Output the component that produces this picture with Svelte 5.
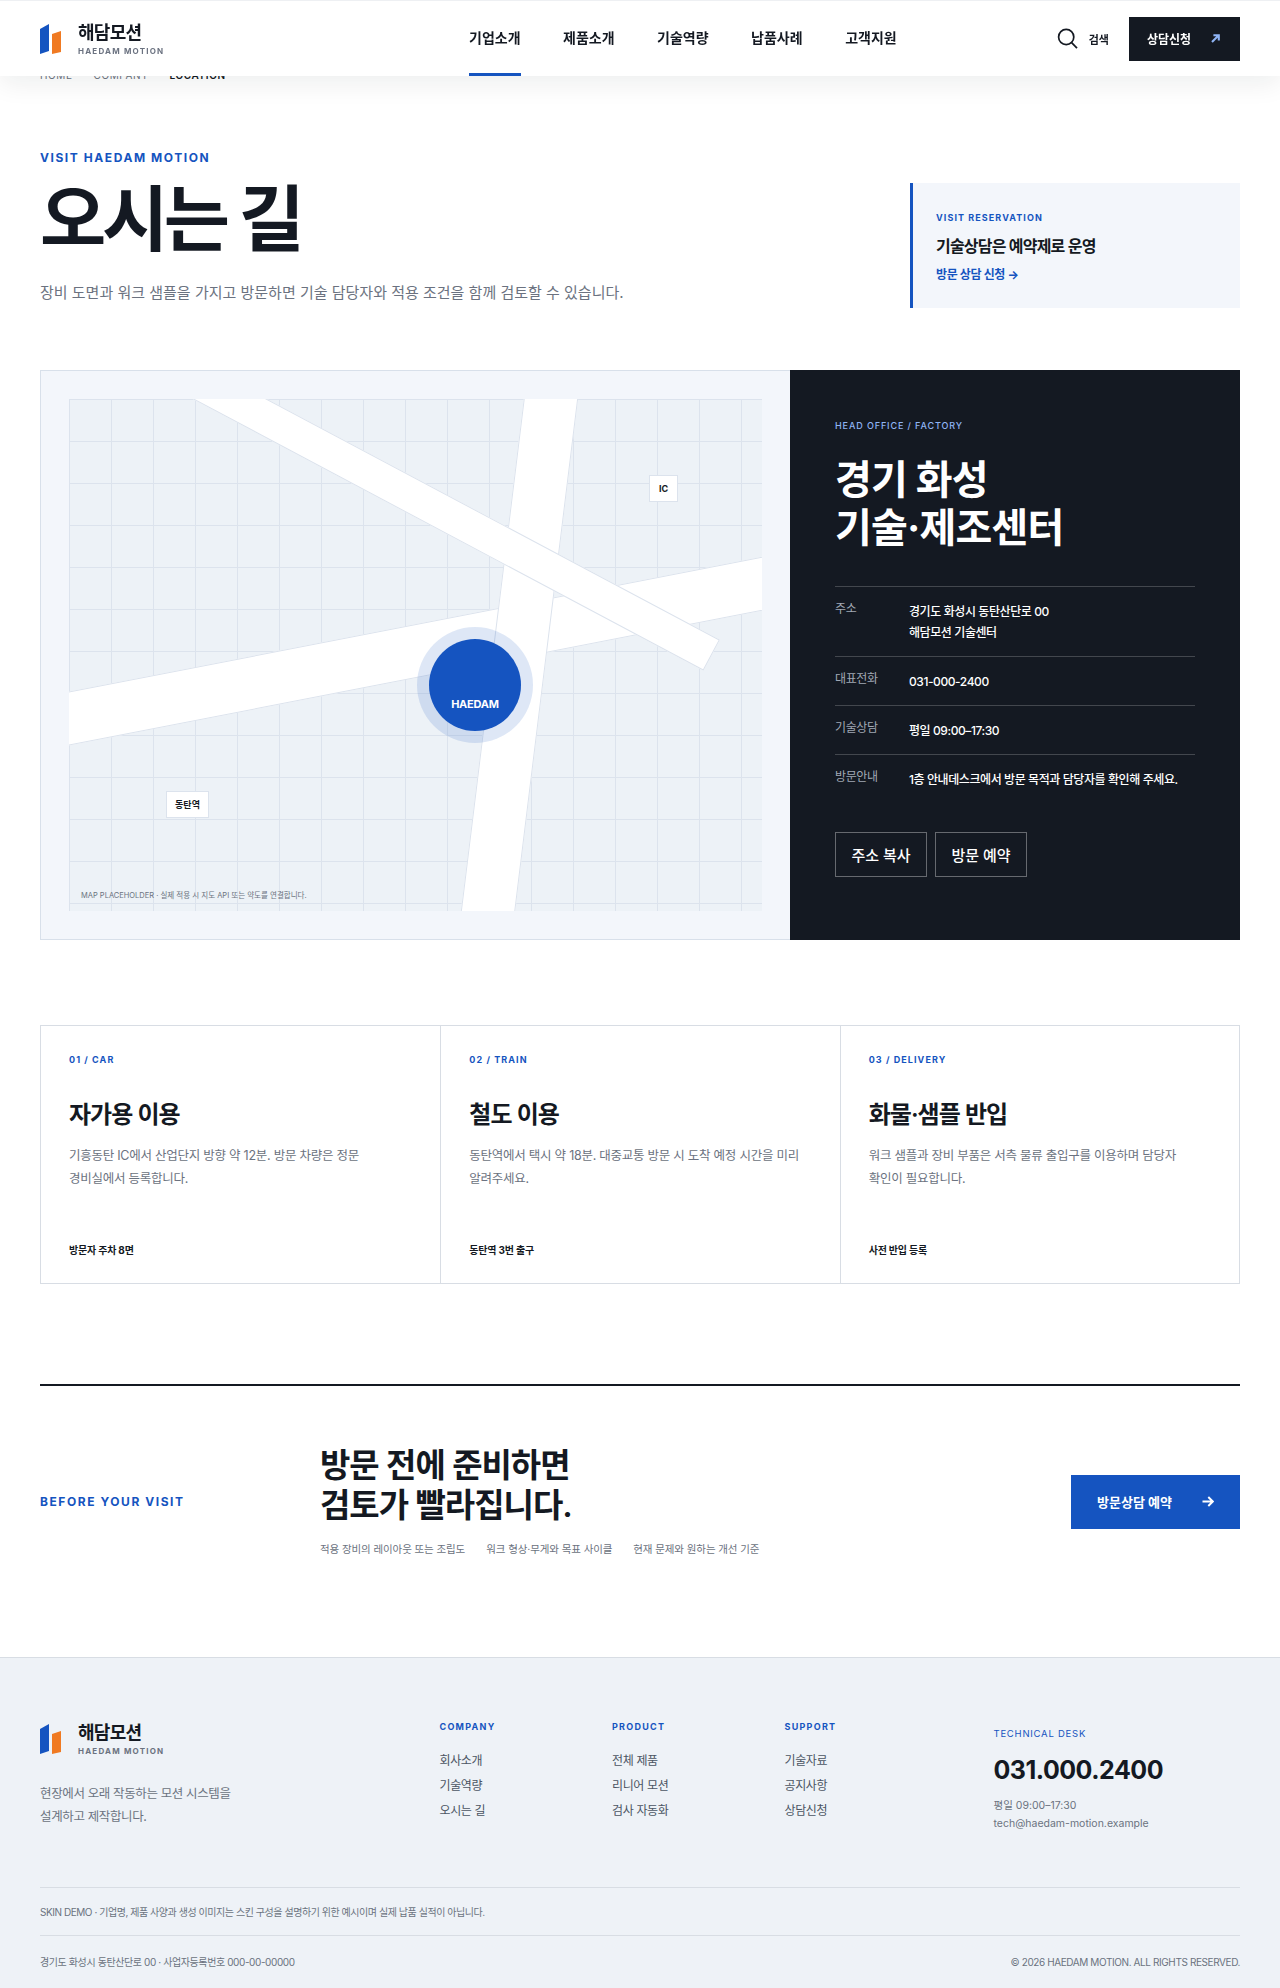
<script>
  const nav = ['기업소개', '제품소개', '기술역량', '납품사례', '고객지원'];

  const info = [
    { label: '주소', lines: ['경기도 화성시 동탄산단로 00', '해담모션 기술센터'] },
    { label: '대표전화', lines: ['031-000-2400'] },
    { label: '기술상담', lines: ['평일 09:00–17:30'] },
    { label: '방문안내', lines: ['1층 안내데스크에서 방문 목적과 담당자를 확인해 주세요.'] }
  ];

  const routes = [
    {
      tag: '01 / CAR',
      title: '자가용 이용',
      desc: '기흥동탄 IC에서 산업단지 방향 약 12분. 방문 차량은 정문 경비실에서 등록합니다.',
      foot: '방문자 주차 8면'
    },
    {
      tag: '02 / TRAIN',
      title: '철도 이용',
      desc: '동탄역에서 택시 약 18분. 대중교통 방문 시 도착 예정 시간을 미리 알려주세요.',
      foot: '동탄역 3번 출구'
    },
    {
      tag: '03 / DELIVERY',
      title: '화물·샘플 반입',
      desc: '워크 샘플과 장비 부품은 서측 물류 출입구를 이용하며 담당자 확인이 필요합니다.',
      foot: '사전 반입 등록'
    }
  ];

  const checklist = ['적용 장비의 레이아웃 또는 조립도', '워크 형상·무게와 목표 사이클', '현재 문제와 원하는 개선 기준'];

  const footerCols = [
    { title: 'COMPANY', links: ['회사소개', '기술역량', '오시는 길'] },
    { title: 'PRODUCT', links: ['전체 제품', '리니어 모션', '검사 자동화'] },
    { title: 'SUPPORT', links: ['기술자료', '공지사항', '상담신청'] }
  ];
</script>

{#snippet logo()}
  <div class="logo">
    <svg class="logo-mark" width="21" height="30" viewBox="0 0 21 30" aria-hidden="true">
      <polygon points="0,5 9,0 9,27 0,30" fill="#1554c0" />
      <polygon points="12,10 21,7 21,28 12,30" fill="#f07a22" />
    </svg>
    <div class="logo-text">
      <strong>해담모션</strong>
      <span>HAEDAM MOTION</span>
    </div>
  </div>
{/snippet}

<header class="header">
  {@render logo()}
  <nav class="nav">
    {#each nav as item, i}
      <a href="#top" class:active={i === 0}>{item}</a>
    {/each}
  </nav>
  <div class="header-actions">
    <button class="search" type="button">
      <svg width="21" height="21" viewBox="0 0 21 21" fill="none" stroke="#141922" stroke-width="1.7" aria-hidden="true">
        <circle cx="9.2" cy="9" r="7.6" />
        <path d="M14.6 14.6 L20 20.2" />
      </svg>
      <span>검색</span>
    </button>
    <a class="header-cta" href="#top">
      <span>상담신청</span>
      <svg width="9" height="9" viewBox="0 0 9 9" fill="none" stroke="#8fb4f5" stroke-width="2.1" aria-hidden="true">
        <path d="M1 8 L7.2 1.8 M2.4 1.2 H7.8 V6.6" />
      </svg>
    </a>
  </div>
</header>

<main class="page">
  <div class="crumbs">
    <span>HOME</span>
    <span>COMPANY</span>
    <span class="current">LOCATION</span>
  </div>

  <section class="hero">
    <div class="hero-copy">
      <p class="eyebrow">VISIT HAEDAM MOTION</p>
      <h1>오시는 길</h1>
      <p class="hero-sub">장비 도면과 워크 샘플을 가지고 방문하면 기술 담당자와 적용 조건을 함께 검토할 수 있습니다.</p>
    </div>
    <aside class="reserve">
      <p class="reserve-tag">VISIT RESERVATION</p>
      <p class="reserve-title">기술상담은 예약제로 운영</p>
      <a href="#top">방문 상담 신청 →</a>
    </aside>
  </section>

  <section class="location">
    <div class="map-wrap">
      <div class="map">
        <div class="road road-a"></div>
        <div class="road road-b"></div>
        <div class="road road-c"></div>
        <div class="pin">HAEDAM</div>
        <div class="tag tag-ic">IC</div>
        <div class="tag tag-station">동탄역</div>
        <p class="map-note">MAP PLACEHOLDER · 실제 적용 시 지도 API 또는 약도를 연결합니다.</p>
      </div>
    </div>
    <div class="office">
      <p class="office-tag">HEAD OFFICE / FACTORY</p>
      <h2>경기 화성<br />기술·제조센터</h2>
      <dl class="info">
        {#each info as row}
          <div class="info-row">
            <dt>{row.label}</dt>
            <dd>
              {#each row.lines as line}
                <span>{line}</span>
              {/each}
            </dd>
          </div>
        {/each}
      </dl>
      <div class="office-actions">
        <button type="button">주소 복사</button>
        <button type="button">방문 예약</button>
      </div>
    </div>
  </section>

  <section class="routes">
    {#each routes as route}
      <article class="route">
        <p class="route-tag">{route.tag}</p>
        <h3>{route.title}</h3>
        <p class="route-desc">{route.desc}</p>
        <p class="route-foot">{route.foot}</p>
      </article>
    {/each}
  </section>

  <section class="prepare">
    <p class="prepare-tag">BEFORE YOUR VISIT</p>
    <div class="prepare-body">
      <h2>방문 전에 준비하면<br />검토가 빨라집니다.</h2>
      <ul>
        {#each checklist as item}
          <li>{item}</li>
        {/each}
      </ul>
    </div>
    <a class="prepare-cta" href="#top">
      <span>방문상담 예약</span>
      <svg width="12" height="11" viewBox="0 0 12 11" fill="none" stroke="#fff" stroke-width="1.9" aria-hidden="true">
        <path d="M0.5 5.5 H10.5 M6.3 1 L10.8 5.5 L6.3 10" />
      </svg>
    </a>
  </section>
</main>

<footer class="footer">
  <div class="footer-top">
    <div class="footer-brand">
      {@render logo()}
      <p>현장에서 오래 작동하는 모션 시스템을<br />설계하고 제작합니다.</p>
    </div>
    {#each footerCols as col}
      <div class="footer-col">
        <h4>{col.title}</h4>
        {#each col.links as link}
          <a href="#top">{link}</a>
        {/each}
      </div>
    {/each}
    <div class="footer-desk">
      <p class="desk-tag">TECHNICAL DESK</p>
      <p class="desk-phone">031.000.2400</p>
      <p class="desk-info">평일 09:00–17:30<br />tech@haedam-motion.example</p>
    </div>
  </div>
  <p class="footer-note">SKIN DEMO · 기업명, 제품 사양과 생성 이미지는 스킨 구성을 설명하기 위한 예시이며 실제 납품 실적이 아닙니다.</p>
  <div class="footer-bottom">
    <span>경기도 화성시 동탄산단로 00 · 사업자등록번호 000-00-00000</span>
    <span>© 2026 HAEDAM MOTION. ALL RIGHTS RESERVED.</span>
  </div>
</footer>

<style>
  :global(body) {
    margin: 0;
    background: #fff;
    color: #141922;
    font-family: Inter, "Noto Sans CJK KR", sans-serif;
    word-break: keep-all;
  }

  p, h1, h2, h3, h4, dl, dd, ul {
    margin: 0;
    padding: 0;
  }

  a {
    color: inherit;
    text-decoration: none;
  }

  button {
    font-family: inherit;
    background: none;
    cursor: pointer;
  }

  /* header */
  .header {
    position: fixed;
    top: 0;
    left: 0;
    right: 0;
    z-index: 10;
    height: 76px;
    box-sizing: border-box;
    padding: 0 40px;
    display: flex;
    align-items: center;
    background: #fff;
    border-top: 1px solid #eef0f3;
    box-shadow: 0 8px 24px rgba(20, 25, 34, 0.07);
  }

  .logo {
    display: flex;
    align-items: center;
    gap: 17px;
  }

  .logo-mark {
    flex: none;
  }

  .logo-text strong {
    display: block;
    font-size: 18px;
    line-height: 24px;
    font-weight: 700;
    letter-spacing: -0.04em;
  }

  .logo-text span {
    display: block;
    margin-top: 1px;
    font-size: 8px;
    line-height: 11px;
    font-weight: 700;
    letter-spacing: 0.15em;
    color: #6b7280;
  }

  .nav {
    position: absolute;
    left: 469px;
    top: 0;
    display: flex;
    gap: 42.5px;
    height: 76px;
  }

  .nav a {
    display: flex;
    align-items: center;
    height: 75px;
    box-sizing: border-box;
    font-size: 14px;
    font-weight: 700;
    border-bottom: 3px solid transparent;
  }

  .nav a.active {
    border-bottom-color: #1554c0;
  }

  .header-actions {
    margin-left: auto;
    display: flex;
    align-items: center;
    gap: 20px;
  }

  .search {
    display: flex;
    align-items: center;
    gap: 11px;
    padding: 0;
    border: 0;
    color: #141922;
    font-size: 11px;
    font-weight: 700;
  }

  .header-cta {
    width: 111px;
    height: 44px;
    box-sizing: border-box;
    padding: 0 20px 0 18px;
    display: flex;
    align-items: center;
    justify-content: space-between;
    background: #141922;
    color: #fff;
    font-size: 12px;
    font-weight: 700;
  }

  /* hero */
  .page {
    width: 1200px;
    margin: 0 auto;
    padding-top: 68px;
  }

  .crumbs {
    display: flex;
    gap: 21px;
    font-size: 10px;
    line-height: 14px;
    letter-spacing: 0.06em;
    color: #6b7280;
  }

  .crumbs .current {
    color: #141922;
    font-weight: 600;
  }

  .hero {
    margin-top: 68px;
    display: flex;
    justify-content: space-between;
    align-items: flex-end;
  }

  .hero-copy {
    padding-bottom: 3px;
  }

  .eyebrow {
    font-size: 12px;
    line-height: 16px;
    font-weight: 700;
    letter-spacing: 0.13em;
    color: #1554c0;
  }

  h1 {
    margin-top: 10px;
    font-size: 72px;
    line-height: 86px;
    font-weight: 700;
    letter-spacing: -0.06em;
  }

  .hero-sub {
    margin-top: 19px;
    font-size: 15px;
    line-height: 24px;
    color: #6b7280;
  }

  .reserve {
    width: 330px;
    height: 125px;
    box-sizing: border-box;
    padding: 29px 23px 0;
    background: #f3f6fb;
    border-left: 3px solid #1554c0;
  }

  .reserve-tag {
    font-size: 9px;
    line-height: 12px;
    font-weight: 700;
    letter-spacing: 0.12em;
    color: #1554c0;
  }

  .reserve-title {
    margin-top: 10px;
    font-size: 16px;
    line-height: 24px;
    font-weight: 600;
    letter-spacing: -0.05em;
  }

  .reserve a {
    display: block;
    margin-top: 8px;
    font-size: 12px;
    line-height: 18px;
    font-weight: 700;
    letter-spacing: -0.03em;
    color: #1554c0;
  }

  /* map + office */
  .location {
    margin-top: 62px;
    display: grid;
    grid-template-columns: 750px 450px;
    height: 570px;
  }

  .map-wrap {
    box-sizing: border-box;
    padding: 28px;
    background: #f3f6fb;
    border: 1px solid #d8e0ea;
    border-right: 0;
  }

  .map {
    position: relative;
    height: 100%;
    overflow: hidden;
    background-color: #edf2f7;
    background-image:
      linear-gradient(#dce3ed 1px, transparent 1px),
      linear-gradient(90deg, #dce3ed 1px, transparent 1px);
    background-size: 42px 42px;
  }

  .road {
    position: absolute;
    box-sizing: border-box;
    background: #fff;
    border: 1px solid #dce3ed;
  }

  .road-a {
    left: -60px;
    top: 225px;
    width: 820px;
    height: 53px;
    transform: rotate(-11deg);
  }

  .road-b {
    left: 423px;
    top: -50px;
    width: 54px;
    height: 620px;
    transform: rotate(7deg);
  }

  .road-c {
    left: -38px;
    top: 69px;
    width: 723px;
    height: 35px;
    transform: rotate(28deg);
  }

  .pin {
    position: absolute;
    left: 360px;
    top: 240px;
    width: 92px;
    height: 92px;
    box-sizing: border-box;
    padding-top: 57px;
    border-radius: 50%;
    background: #1554c0;
    box-shadow: 0 0 0 12px rgba(21, 84, 192, 0.14);
    color: #fff;
    text-align: center;
    font-size: 11px;
    line-height: 16px;
    font-weight: 700;
    letter-spacing: -0.02em;
  }

  .tag {
    position: absolute;
    box-sizing: border-box;
    height: 27px;
    display: flex;
    align-items: center;
    justify-content: center;
    background: #fff;
    border: 1px solid #dce3ed;
    font-size: 9px;
    font-weight: 700;
  }

  .tag-ic {
    left: 580px;
    top: 76px;
    width: 29px;
  }

  .tag-station {
    left: 97px;
    top: 392px;
    width: 43px;
  }

  .map-note {
    position: absolute;
    left: 12px;
    bottom: 9px;
    font-size: 7.5px;
    line-height: 12px;
    color: #6b7280;
  }

  .office {
    box-sizing: border-box;
    padding: 49px 45px 0;
    background: #141922;
    color: #fff;
  }

  .office-tag {
    font-size: 9px;
    line-height: 14px;
    font-weight: 500;
    letter-spacing: 0.1em;
    color: #8fb4f5;
  }

  .office h2 {
    margin-top: 23px;
    font-size: 40px;
    line-height: 48px;
    font-weight: 700;
    letter-spacing: -0.02em;
  }

  .info {
    margin-top: 34px;
  }

  .info-row {
    display: grid;
    grid-template-columns: 74px 1fr;
    padding: 14px 0 13px;
    border-top: 1px solid rgba(255, 255, 255, 0.2);
  }

  .info-row dt {
    font-size: 12px;
    line-height: 15px;
    letter-spacing: -0.03em;
    color: #a1a8b4;
  }

  .info-row dd span {
    display: block;
    font-size: 12px;
    line-height: 21px;
    font-weight: 500;
    letter-spacing: -0.035em;
  }

  .office-actions {
    margin-top: 29px;
    display: flex;
    gap: 8px;
  }

  .office-actions button {
    width: 92px;
    height: 45px;
    padding: 0;
    border: 1px solid rgba(255, 255, 255, 0.35);
    color: #fff;
    font-size: 15px;
    font-weight: 500;
  }

  /* routes */
  .routes {
    margin-top: 85px;
    display: grid;
    grid-template-columns: repeat(3, 1fr);
    height: 259px;
    box-sizing: border-box;
    border: 1px solid #d8dde4;
  }

  .route {
    box-sizing: border-box;
    padding: 28px 28px 0;
    border-left: 1px solid #d8dde4;
  }

  .route:first-child {
    border-left: 0;
  }

  .route-tag {
    font-size: 9px;
    line-height: 12px;
    font-weight: 700;
    letter-spacing: 0.12em;
    color: #1554c0;
  }

  .route h3 {
    margin-top: 32px;
    font-size: 24px;
    line-height: 34px;
    font-weight: 600;
    letter-spacing: -0.04em;
  }

  .route-desc {
    margin-top: 12px;
    font-size: 12.5px;
    line-height: 23px;
    letter-spacing: -0.02em;
    color: #6b7280;
  }

  .route-foot {
    margin-top: 52px;
    font-size: 10px;
    line-height: 16px;
    font-weight: 700;
    letter-spacing: -0.02em;
  }

  /* before your visit */
  .prepare {
    margin-top: 100px;
    height: 273px;
    box-sizing: border-box;
    padding-bottom: 40px;
    border-top: 2px solid #141922;
    display: flex;
    align-items: center;
  }

  .prepare-tag {
    width: 280px;
    flex: none;
    font-size: 12px;
    line-height: 16px;
    font-weight: 700;
    letter-spacing: 0.13em;
    color: #1554c0;
  }

  .prepare h2 {
    font-size: 33px;
    line-height: 40px;
    font-weight: 600;
    letter-spacing: -0.03em;
  }

  .prepare ul {
    margin-top: 16px;
    display: flex;
    gap: 21px;
    list-style: none;
    font-size: 10.5px;
    line-height: 18px;
    letter-spacing: -0.01em;
    color: #6b7280;
  }

  .prepare-cta {
    margin-left: auto;
    width: 169px;
    height: 54px;
    box-sizing: border-box;
    padding: 0 26px;
    display: flex;
    align-items: center;
    justify-content: space-between;
    background: #1554c0;
    color: #fff;
    font-size: 13px;
    font-weight: 700;
  }

  /* footer */
  .footer {
    box-sizing: border-box;
    height: 331px;
    padding: 63px 40px 0;
    background: #eef2f7;
    border-top: 1px solid #d8dde4;
  }

  .footer-top {
    display: grid;
    grid-template-columns: 399.5px 172.5px 172.5px 209px 1fr;
    height: 166px;
  }

  .footer-brand p {
    margin-top: 25px;
    font-size: 12.5px;
    line-height: 23px;
    letter-spacing: -0.03em;
    color: #6b7280;
  }

  .footer-col h4 {
    font-size: 9px;
    line-height: 12px;
    font-weight: 700;
    letter-spacing: 0.14em;
    color: #1554c0;
    margin: 0 0 15px;
  }

  .footer-col a {
    display: block;
    font-size: 12px;
    line-height: 25px;
    letter-spacing: -0.03em;
    color: #4b5563;
  }

  .desk-tag {
    margin-top: 6px;
    font-size: 9.5px;
    line-height: 14px;
    letter-spacing: 0.08em;
    color: #1554c0;
  }

  .desk-phone {
    margin-top: 13px;
    font-size: 25px;
    line-height: 32px;
    font-weight: 700;
    letter-spacing: -0.02em;
  }

  .desk-info {
    margin-top: 11px;
    font-size: 10.5px;
    line-height: 18px;
    color: #6b7280;
  }

  .footer-note {
    padding: 16px 0 15px;
    border-top: 1px solid #d8dde4;
    font-size: 10px;
    line-height: 16px;
    letter-spacing: -0.045em;
    color: #6b7280;
  }

  .footer-bottom {
    display: flex;
    justify-content: space-between;
    padding-top: 18px;
    border-top: 1px solid #d8dde4;
    font-size: 10px;
    line-height: 16px;
    letter-spacing: -0.04em;
    color: #6b7280;
  }
</style>
